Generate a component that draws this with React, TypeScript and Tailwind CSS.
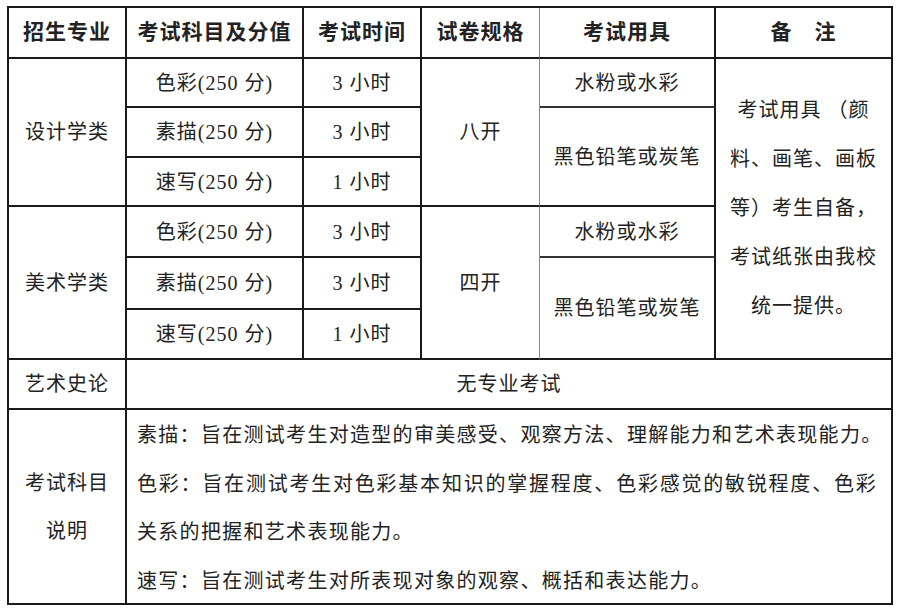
import React from 'react';

const font = { fontFamily: '"Liberation Serif", "Noto Sans CJK SC", serif' };

function Cell({ className = '', children }: { className?: string; children?: React.ReactNode }) {
    return (
        <div className={`border-r-2 border-b-2 border-[#1a1a1a] flex items-center justify-center text-[#222] ${className}`}>
            {children}
        </div>
    );
}

const groups = [
    { major: '设计学类', size: '八开', rowStart: ['row-start-2', 'row-start-3', 'row-start-4'] },
    { major: '美术学类', size: '四开', rowStart: ['row-start-5', 'row-start-6', 'row-start-7'] },
];

const subjects = [
    { name: '色彩', time: '3' },
    { name: '素描', time: '3' },
    { name: '速写', time: '1' },
];

export default function App() {
    return (
        <div className="w-[900px] h-[611px] bg-white pt-[6px] pl-[7px]" style={font}>
            <div className="grid grid-cols-[118px_177px_118px_118px_176px_177px] grid-rows-[51px_49px_50px_49px_51px_52px_50px_50px_195px] border-l-2 border-t-2 border-[#1a1a1a] w-[886px] text-[20px] tracking-[1px]">
                {/* Header */}
                <Cell className="font-bold text-[#111] text-[21px]">招生专业</Cell>
                <Cell className="font-bold text-[#111] text-[21px]">考试科目及分值</Cell>
                <Cell className="font-bold text-[#111] text-[21px]">考试时间</Cell>
                <Cell className="font-bold text-[#111] text-[21px] border-r-[1px] border-r-[#8a8a8a]">试卷规格</Cell>
                <Cell className="font-bold text-[#111] text-[21px]">考试用具</Cell>
                <Cell className="font-bold text-[#111] text-[21px]">备　注</Cell>

                {/* Majors */}
                <Cell className="col-start-1 row-start-2 row-span-3">设计学类</Cell>
                <Cell className="col-start-1 row-start-5 row-span-3">美术学类</Cell>

                {groups.map((g) =>
                    subjects.map((s, i) => (
                        <React.Fragment key={g.major + s.name}>
                            <Cell className={`col-start-2 ${g.rowStart[i]}`}>
                                {s.name}(250 分)
                            </Cell>
                            <Cell className={`col-start-3 ${g.rowStart[i]}`}>{s.time} 小时</Cell>
                        </React.Fragment>
                    ))
                )}

                <Cell className="col-start-4 row-start-2 row-span-3 border-r-[1px] border-r-[#8a8a8a]">八开</Cell>
                <Cell className="col-start-4 row-start-5 row-span-3 border-r-[1px] border-r-[#8a8a8a]">四开</Cell>

                <Cell className="col-start-5 row-start-2 border-b-[#333]">水粉或水彩</Cell>
                <Cell className="col-start-5 row-start-3 row-span-2">黑色铅笔或炭笔</Cell>
                <Cell className="col-start-5 row-start-5 border-b-[#333]">水粉或水彩</Cell>
                <Cell className="col-start-5 row-start-6 row-span-2">黑色铅笔或炭笔</Cell>

                {/* Remarks */}
                <Cell className="col-start-6 row-start-2 row-span-6 flex-col leading-[49px]">
                    <div>考试用具 （颜</div>
                    <div>料、画笔、画板</div>
                    <div>等）考生自备，</div>
                    <div>考试纸张由我校</div>
                    <div>统一提供。</div>
                </Cell>

                {/* Art history */}
                <Cell className="col-start-1 row-start-8">艺术史论</Cell>
                <Cell className="col-start-2 col-span-5 row-start-8">无专业考试</Cell>

                {/* Description */}
                <Cell className="col-start-1 row-start-9 flex-col leading-[48px]">
                    <div>考试科目</div>
                    <div>说明</div>
                </Cell>
                <div className="col-start-2 col-span-5 row-start-9 border-r-2 border-b-2 border-[#1a1a1a] pl-[10px] pt-[1px] leading-[48.5px] text-[#222] tracking-[1.3px]">
                    <div className="whitespace-nowrap">素描：旨在测试考生对造型的审美感受、观察方法、理解能力和艺术表现能力。</div>
                    <div className="mr-[14px] [text-align-last:justify]">色彩：旨在测试考生对色彩基本知识的掌握程度、色彩感觉的敏锐程度、色彩</div>
                    <div>关系的把握和艺术表现能力。</div>
                    <div>速写：旨在测试考生对所表现对象的观察、概括和表达能力。</div>
                </div>
            </div>
        </div>
    );
}
